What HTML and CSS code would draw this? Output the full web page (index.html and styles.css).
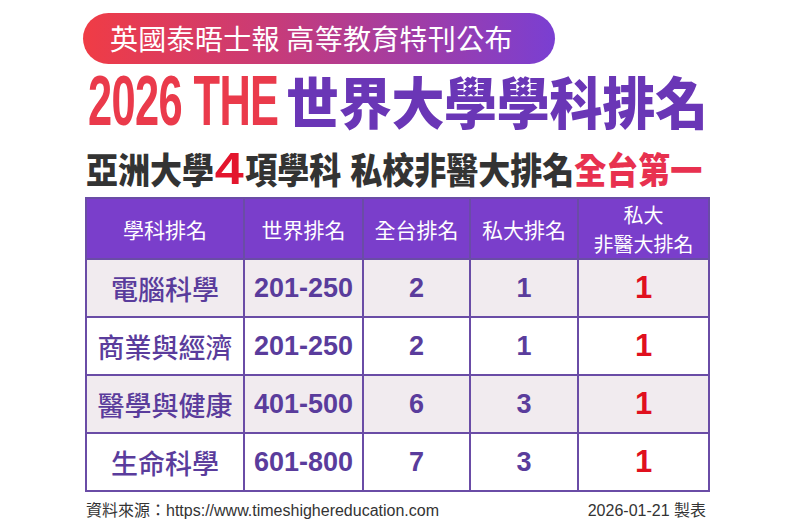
FILE: index.html
```html
<!DOCTYPE html>
<html lang="zh-Hant">
<head>
<meta charset="utf-8">
<link rel="stylesheet" href="styles.css">
</head>
<body>
<div class="page">
  <div class="pill">英國泰晤士報 高等教育特刊公布</div>
  <h1 class="title"><span class="en"><span class="en-inner">2026 THE</span></span><span class="zh">世界大學學科排名</span></h1>
  <h2 class="sub"><span>亞洲大學</span><span class="four">4</span><span>項學科</span><span class="sp"></span><span>私校非醫大排名</span><span class="red">全台第一</span></h2>
  <table class="rank">
    <colgroup>
      <col class="c1"><col class="c2"><col class="c3"><col class="c4"><col class="c5">
    </colgroup>
    <thead>
      <tr><th>學科排名</th><th>世界排名</th><th>全台排名</th><th>私大排名</th><th class="two"><span class="ln">私大</span><span class="ln">非醫大排名</span></th></tr>
    </thead>
    <tbody>
      <tr class="alt"><td class="name">電腦科學</td><td>201-250</td><td>2</td><td>1</td><td class="top">1</td></tr>
      <tr><td class="name">商業與經濟</td><td>201-250</td><td>2</td><td>1</td><td class="top">1</td></tr>
      <tr class="alt"><td class="name">醫學與健康</td><td>401-500</td><td>6</td><td>3</td><td class="top">1</td></tr>
      <tr><td class="name">生命科學</td><td>601-800</td><td>7</td><td>3</td><td class="top">1</td></tr>
    </tbody>
  </table>
  <div class="foot"><span>資料來源：https://www.timeshighereducation.com</span><span>2026-01-21 製表</span></div>
</div>
</body>
</html>
```
FILE: styles.css
```css
* { box-sizing: border-box; }
html, body { margin: 0; padding: 0; background: #ffffff; }
body { width: 792px; height: 530px; overflow: hidden; font-family: "Liberation Sans", "Noto Sans CJK TC", sans-serif; }
.page { padding: 13px 0 0 0; }
.pill {
  margin-left: 83px;
  width: 472px;
  height: 51px;
  border-radius: 26px;
  background: linear-gradient(90deg, #f03c45 0%, #c83b78 40%, #7a3fd2 100%);
  color: #ffffff;
  font-family: "Noto Sans CJK TC", sans-serif;
  font-size: 28px;
  line-height: 51px;
  padding-left: 27px;
  letter-spacing: 0.3px;
  white-space: nowrap;
}
.title {
  margin: 0 0 0 88px;
  height: 75.5px;
  display: flex;
  align-items: flex-start;
  white-space: nowrap;
  font-weight: 700;
}
.en { display: inline-block; width: 198px; height: 75.5px; }
.en-inner {
  display: inline-block;
  font-family: "Liberation Sans", sans-serif;
  font-weight: 700;
  font-size: 70px;
  line-height: 75.5px;
  color: #ea3a4b;
  transform: scaleX(0.62);
  transform-origin: left center;
  letter-spacing: -1px;
}
.zh {
  display: inline-block;
  font-family: "Noto Sans CJK TC", sans-serif;
  font-weight: 900;
  font-size: 53px;
  line-height: 72px;
  color: #6a36b6;
  letter-spacing: -0.3px;
  transform: scaleY(1.06);
  transform-origin: center;
}
.sub {
  margin: 5px 0 0 86px;
  height: 46px;
  display: flex;
  align-items: center;
  white-space: nowrap;
  font-family: "Noto Sans CJK TC", sans-serif;
  font-weight: 900;
  font-size: 32px;
  line-height: 46px;
  color: #333333;
  transform: scaleY(1.13);
  transform-origin: center;
}
.four {
  display: inline-block;
  font-family: "Liberation Sans", sans-serif;
  font-weight: 700;
  font-size: 40px;
  line-height: 46px;
  color: #e3152d;
  margin: 0 5px 0 4px;
  transform: scaleX(1.3);
  transform-origin: center;
}
.sp { width: 9px; }
.red { color: #e8314f; }
.rank {
  margin: 6.5px 0 0 85px;
  border-collapse: collapse;
  table-layout: fixed;
  width: 623px;
  border: 2px solid #6a4ca6;
}
.c1 { width: 158px; }
.c2 { width: 119px; }
.c3 { width: 107px; }
.c4 { width: 108px; }
.c5 { width: 131px; }
.rank th {
  background: #7a3ecb;
  color: #ffffff;
  font-family: "Noto Sans CJK TC", sans-serif;
  font-weight: 400;
  font-size: 21px;
  height: 61px;
  line-height: 28px;
  border: 2px solid #6a4ca6;
  padding: 0;
}
.rank th.two { font-size: 20px; line-height: 29px; }
.ln { display: block; }
.rank td {
  height: 58px;
  border: 2px solid #6a4ca6;
  text-align: center;
  color: #5a3c9c;
  font-family: "Liberation Sans", sans-serif;
  font-weight: 700;
  font-size: 27px;
  padding: 0;
  background: #ffffff;
}
.rank tr.alt td { background: #f1ebef; }
.rank td.name {
  font-family: "Noto Sans CJK TC", sans-serif;
  font-weight: 500;
  font-size: 27px;
}
.rank td.top { color: #e0101e; font-size: 31px; }
.foot {
  margin: 7px 0 0 86px;
  width: 620px;
  display: flex;
  justify-content: space-between;
  font-family: "Liberation Sans", "Noto Sans CJK TC", sans-serif;
  font-size: 16px;
  color: #333333;
  line-height: 24px;
}
```
